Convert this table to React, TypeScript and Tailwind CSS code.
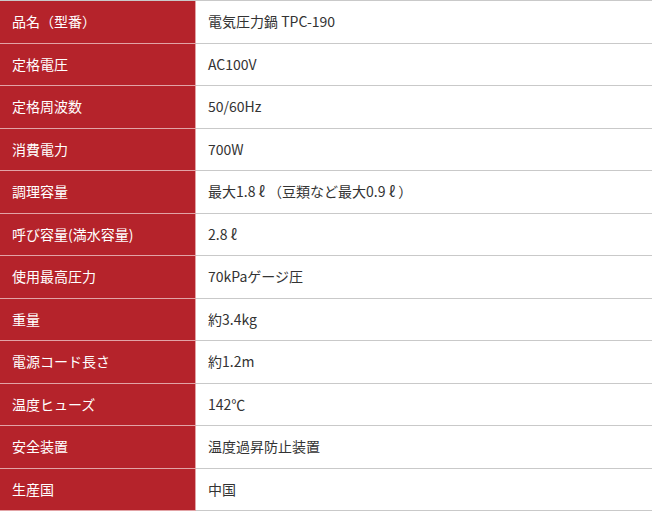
const specs = [
  ["品名（型番）", "電気圧力鍋 TPC-190"],
  ["定格電圧", "AC100V"],
  ["定格周波数", "50/60Hz"],
  ["消費電力", "700W"],
  ["調理容量", "最大1.8 ℓ （豆類など最大0.9 ℓ ）"],
  ["呼び容量(満水容量)", "2.8 ℓ"],
  ["使用最高圧力", "70kPaゲージ圧"],
  ["重量", "約3.4kg"],
  ["電源コード長さ", "約1.2m"],
  ["温度ヒューズ", "142℃"],
  ["安全装置", "温度過昇防止装置"],
  ["生産国", "中国"],
];

export default function App() {
  return (
    <div
      className="w-[652px] h-[512px] bg-white overflow-hidden"
      style={{ fontFamily: '"Noto Sans CJK JP", "Noto Sans", sans-serif' }}
    >
      <div className="border-t border-[#c9c9c9]">
        {specs.map(([label, value]) => (
          <div key={label} className="flex h-[42.5px] text-[14px]">
            <div className="w-[196px] shrink-0 flex items-center pl-[12px] bg-[#b5232b] text-white border-b border-r border-[#e2a3a6]">
              {label}
            </div>
            <div className="flex-1 flex items-center pl-[12px] text-[#333333] border-b border-[#c9c9c9] whitespace-pre">
              {value}
            </div>
          </div>
        ))}
      </div>
    </div>
  );
}
